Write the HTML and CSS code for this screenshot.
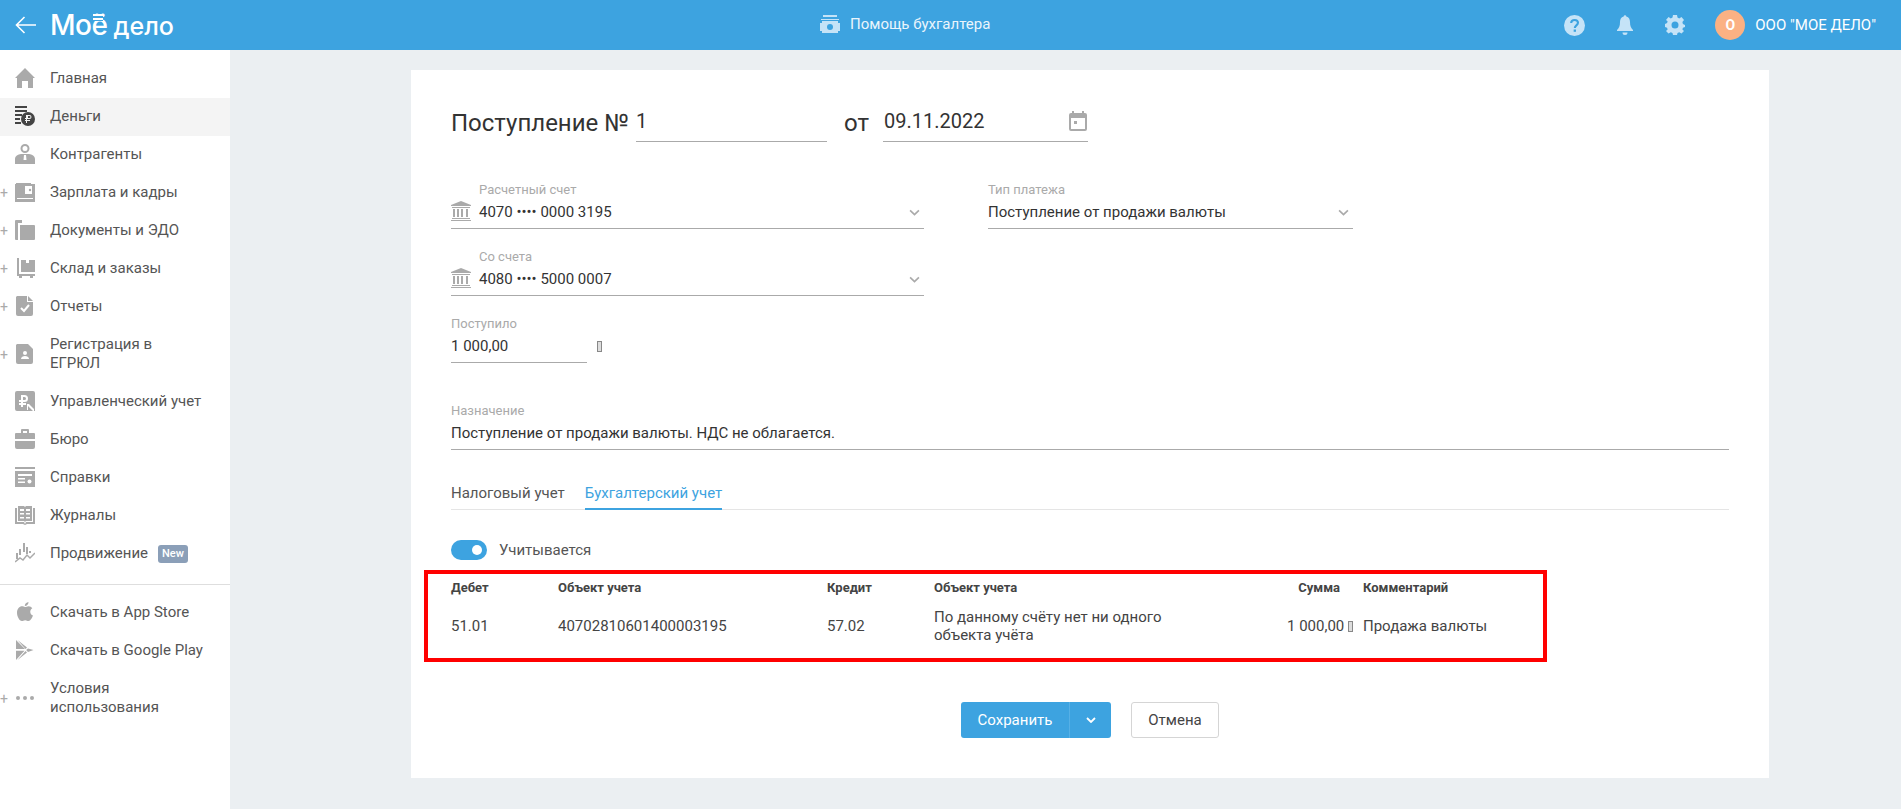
FILE: index.html
```html
<!DOCTYPE html>
<html lang="ru">
<head>
<meta charset="utf-8">
<title>Поступление</title>
<link rel="stylesheet" href="styles.css">
</head>
<body>
<header class="topbar">
  <div class="brand">
    <svg class="back" viewBox="0 0 21 18" width="21" height="18"><path d="M9.5 1 1.5 9l8 8M1.5 9H21" fill="none" stroke="#fff" stroke-width="1.6"/></svg>
    <span class="logo">Моё<span class="logo-small">дело</span><i class="logo-bars"></i></span>
  </div>
  <a class="help">
    <svg viewBox="0 0 20 20" width="20" height="20"><path fill="#c5e3f7" d="M3 1h14v2H3zM1 5h18v1H1zM0 7h20v12H0z"/><circle cx="10" cy="13" r="3" fill="#3da3e0"/><path fill="#3da3e0" d="M0 7h2v2H0zM18 7h2v2h-2zM0 17h2v2H0zM18 17h2v2h-2z"/></svg>
    Помощь бухгалтера
  </a>
  <div class="top-right">
    <svg class="ti-help" viewBox="0 0 20 20" width="21" height="21"><circle cx="10" cy="10" r="10" fill="#c5e3f7"/><path d="M6.8 7.6C6.9 5.6 8.300 4.700 10.100 4.700c1.900 0 3.200 1.100 3.200 2.700 0 2.500-3 2.500-3 5" fill="none" stroke="#3da3e0" stroke-width="2"/><rect x="9.200" y="13.800" width="2.200" height="2.200" fill="#3da3e0"/></svg>
    <svg class="ti-bell" viewBox="0 0 16 20" width="16" height="20"><path fill="#c5e3f7" d="M6.700 1.500a1.300 1.300 0 0 1 2.600 0C12 2.200 13 4.500 13 7c0 4 1 6 3 8v1H0v-1c2-2 3-4 3-8 0-2.500 1-4.800 3.700-5.500zM5.500 17.500h5A2.500 2.500 0 0 1 8 20a2.500 2.500 0 0 1-2.500-2.500z"/></svg>
    <svg class="ti-gear" viewBox="0 0 20 20" width="20" height="20"><path fill="#c5e3f7" fill-rule="evenodd" d="M8 0h4l.5 2.600 1.700.8L16.500 2l2.500 3-1.600 2.100.5 1.800L20 10v0l0 1.900-2.100.8-.5 1.800L19 16l-2.500 2.600-2.300-1.400-1.700.8L12 20H8l-.5-2-1.700-.8L3.500 18.600 1 16l1.600-1.500-.5-1.800L0 11.900V8.900l2.100-.9.5-1.800L1 5l2.500-3 2.300 1.400 1.700-.8zM10 6.500a3.500 3.500 0 1 0 0 7 3.500 3.500 0 0 0 0-7z"/></svg>
    <span class="avatar">О</span>
    <span class="org">ООО "МОЕ ДЕЛО"</span>
  </div>
</header>

<div class="layout">
  <nav class="sidebar">
    <ul class="menu">
      <li class="item"><svg class="ic" viewBox="0 0 20 20"><path d="M10 0 20 10h-2v10h-5v-7H7v7H2V10H0z"/></svg><span class="item-text">Главная</span></li>
      <li class="item active"><svg class="ic dark" viewBox="0 0 20 20"><path d="M0 0h12v2H0zM0 4h12v2H0zM0 8h7v2H0zM0 12h5v2H0zM0 16h6v2H0z"/><circle cx="13" cy="13" r="7"/><path d="M12 9h2.500a2 2 0 0 1 0 4H12v1h3v1h-3v2h-1v-2h-1v-1h1v-1h-1v-1h1V9zm1 1v2h1.500a1 1 0 0 0 0-2z" fill="#f4f4f4"/></svg><span class="item-text">Деньги</span></li>
      <li class="item"><svg class="ic" viewBox="0 0 20 20"><path fill-rule="evenodd" d="M10 0a4.500 4.500 0 1 1 0 9 4.500 4.500 0 0 1 0-9zm0 2a2.500 2.500 0 1 0 0 5 2.500 2.500 0 0 0 0-5zM6 10h8c3 .5 6 2 6 5v5H0v-5c0-3 3-4.500 6-5z"/><path fill="#fff" d="M9 11h2l.5 5h-3z"/></svg><span class="item-text">Контрагенты</span></li>
      <li class="item plus"><svg class="ic" viewBox="0 0 20 20"><path d="M0 2h20v18H0z"/><path fill="#aaa" d="M1 1h15v2H1z"/><path fill="#fff" d="M10 4h7v8h-7zM2 16h16v1H2z"/><circle cx="15" cy="8" r="1.200" fill="#aaa"/></svg><span class="item-text">Зарплата и кадры</span></li>
      <li class="item plus"><svg class="ic" viewBox="0 0 20 20"><path d="M1 0h6v3h-4v17H1a1 1 0 0 1-1-1V1a1 1 0 0 1 1-1zM5 5h14a1 1 0 0 1 1 1v13a1 1 0 0 1-1 1H5z"/></svg><span class="item-text">Документы и ЭДО</span></li>
      <li class="item plus"><svg class="ic" viewBox="0 0 20 20"><path d="M2 0h2v16h16v2h-2v2h-3v-2H7v2H4v-2H2zM6 2h14v12H6z"/><path fill="#fff" d="M11 2h3v3h-3z"/></svg><span class="item-text">Склад и заказы</span></li>
      <li class="item plus"><svg class="ic" viewBox="0 0 20 20"><path d="M2 0h11l5 5v13a2 2 0 0 1-2 2H3a2 2 0 0 1-2-2V1z"/><path d="m6 12 3 3 5-6" fill="none" stroke="#fff" stroke-width="2"/><path fill="#fff" d="M12 0h1v5h5v1h-6z"/></svg><span class="item-text">Отчеты</span></li>
      <li class="item plus"><svg class="ic" viewBox="0 0 20 20"><path d="M2 0h11l5 5v13a2 2 0 0 1-2 2H3a2 2 0 0 1-2-2V1z"/><circle cx="10" cy="9" r="2" fill="#fff"/><path fill="#fff" d="M6 15c0-2 2-3 4-3s4 1 4 3z"/></svg><span class="item-text">Регистрация в<br>ЕГРЮЛ</span></li>
      <li class="item"><svg class="ic" viewBox="0 0 20 20"><path fill-rule="evenodd" d="M2 0h16a2 2 0 0 1 2 2v18H2a2 2 0 0 1-2-2V2a2 2 0 0 1 2-2zm4 4v5H4v2h2v1H4v2h2v2h2v-2h3v-2H8v-1h1.500a3.500 3.500 0 0 0 0-7zm2 2h1.500a1.500 1.500 0 0 1 0 3H8z"/><path d="m14 13 5 5v2h-1l-5-5v4h-1v-6z" fill="#fff"/></svg><span class="item-text">Управленческий учет</span></li>
      <li class="item"><svg class="ic" viewBox="0 0 20 20"><path d="M7 0h6a1 1 0 0 1 1 1v3h5a1 1 0 0 1 1 1v5H0V5a1 1 0 0 1 1-1h5V1a1 1 0 0 1 1-1zM8 2v2h4V2zM0 12h20v6a2 2 0 0 1-2 2H2a2 2 0 0 1-2-2z"/></svg><span class="item-text">Бюро</span></li>
      <li class="item"><svg class="ic" viewBox="0 0 20 20"><path d="M0 0h20v2H0zM0 4h20v16H0z"/><path fill="#fff" d="M3 7h14v2H3zM3 11h7v1.500H3zM3 14.500h7V16H3z"/><circle cx="14.500" cy="14.500" r="2" fill="#fff"/></svg><span class="item-text">Справки</span></li>
      <li class="item"><svg class="ic" viewBox="0 0 20 20"><path fill-rule="evenodd" d="M0 3h2v14h7l1 2 1-2h7V3h2v16h-8l-2 1-2-1H0zM3 1h6l1 1 1-1h6v15h-6l-1 1-1-1H3zm2 3v2h4V4zm6 0v2h4V4zM5 8v1.500h4V8zm6 0v1.500h4V8zm-6 4v1.500h4V12zm6 0v1.500h4V12z"/></svg><span class="item-text">Журналы</span></li>
      <li class="item"><svg class="ic" viewBox="0 0 20 20"><path d="M8 0h2v9H8zM4 6h2v6H4zM1 10h2v6H1zM11 4h2v7h-2zM14 8h2v2h-2z"/><path d="m0 19 5-4 3 2 4-5 3 3 5-5" fill="none" stroke="#aaa" stroke-width="1.500"/></svg><span class="item-text">Продвижение</span><span class="badge">New</span></li>
    </ul>
    <ul class="menu bottom">
      <li class="item"><svg class="ic" viewBox="0 0 20 20"><path d="M13.500 0c.2 2.200-1.700 4.200-3.700 4.100C9.600 2 11.600.2 13.500 0zM10 5c1 0 2-.8 3.600-.8 1.500 0 2.900.8 3.700 2-3 1.900-2.500 6 .7 7.300-.8 2.200-2.500 5.500-4.500 5.500-1.200 0-1.700-.8-3.300-.8s-2.200.8-3.400.8C4.500 19 2 14.500 2 10.700 2 6.800 4.500 4.300 7 4.300 8.300 4.300 9.200 5 10 5z"/></svg><span class="item-text">Скачать в App Store</span></li>
      <li class="item"><svg class="ic" viewBox="0 0 20 20"><path d="M1 0 10 9 1 9zM1 20V10.800h8.500zM2.500 0l9.500 7.500L10.500 9zM2.500 20l9.500-7.500-1.500-1.500zM13 8.500l5.500 1.500-5.500 2-1.800-2z"/></svg><span class="item-text">Скачать в Google Play</span></li>
      <li class="item plus"><svg class="ic" viewBox="0 0 20 20"><circle cx="3" cy="10" r="2"/><circle cx="10" cy="10" r="2"/><circle cx="17" cy="10" r="2"/></svg><span class="item-text">Условия<br>использования</span></li>
    </ul>
  </nav>

  <main class="main">
    <section class="card">
      <div class="doc-head">
        <span class="doc-title">Поступление №</span>
        <span class="head-input number">1</span>
        <span class="doc-from">от</span>
        <span class="head-input date">09.11.2022
          <svg viewBox="0 0 18 20" width="18" height="20"><path fill="#aaa" d="M3 0h2v2h8V0h2v2h1a2 2 0 0 1 2 2v14a2 2 0 0 1-2 2H2a2 2 0 0 1-2-2V4a2 2 0 0 1 2-2h1z"/><path fill="#fff" d="M2 7h14v11H2z"/><path fill="#aaa" d="M5 10h3v3H5z"/></svg>
        </span>
      </div>

      <div class="form-row first">
        <div class="field wide with-icon">
          <label class="field-label">Расчетный счет</label>
          <div class="field-value">
            <svg class="bank" viewBox="0 0 20 20" width="20" height="20"><path fill="#aaa" d="M10 0 20 4v1H0V4zM1 6h18v1H1zM2 8h2v8H2zM6 8h2v8H6zM10 8h2v8h-2zM15 8h2v8h-2zM1 17h18v1H1zM0 19h20v1H0z"/></svg>
            <span>4070 •••• 0000 3195</span>
            <svg class="chev" viewBox="0 0 10 6" width="11" height="7"><path d="m1 1 4 4 4-4" fill="none" stroke="#aaa" stroke-width="1.500"/></svg>
          </div>
        </div>
        <div class="field type">
          <label class="field-label">Тип платежа</label>
          <div class="field-value"><span>Поступление от продажи валюты</span>
            <svg class="chev" viewBox="0 0 10 6" width="11" height="7"><path d="m1 1 4 4 4-4" fill="none" stroke="#aaa" stroke-width="1.500"/></svg>
          </div>
        </div>
      </div>

      <div class="form-row">
        <div class="field wide with-icon">
          <label class="field-label">Со счета</label>
          <div class="field-value">
            <svg class="bank" viewBox="0 0 20 20" width="20" height="20"><path fill="#aaa" d="M10 0 20 4v1H0V4zM1 6h18v1H1zM2 8h2v8H2zM6 8h2v8H6zM10 8h2v8h-2zM15 8h2v8h-2zM1 17h18v1H1zM0 19h20v1H0z"/></svg>
            <span>4080 •••• 5000 0007</span>
            <svg class="chev" viewBox="0 0 10 6" width="11" height="7"><path d="m1 1 4 4 4-4" fill="none" stroke="#aaa" stroke-width="1.500"/></svg>
          </div>
        </div>
      </div>

      <div class="form-row">
        <div class="field amount">
          <label class="field-label">Поступило</label>
          <div class="field-value">1 000,00</div>
        </div>
        <i class="tofu amount-tofu"></i>
      </div>

      <div class="field purpose">
        <label class="field-label">Назначение</label>
        <div class="field-value">Поступление от продажи валюты. НДС не облагается.</div>
      </div>

      <div class="tabs">
        <span class="tab">Налоговый учет</span>
        <span class="tab active">Бухгалтерский учет</span>
      </div>

      <div class="toggle-row">
        <span class="toggle"><i class="knob"></i></span>
        <span>Учитывается</span>
      </div>

      <div class="entries">
        <div class="th">Дебет</div>
        <div class="th">Объект учета</div>
        <div class="th">Кредит</div>
        <div class="th">Объект учета</div>
        <div class="th sum-head">Сумма</div>
        <div class="th">Комментарий</div>
        <div class="td">51.01</div>
        <div class="td">40702810601400003195</div>
        <div class="td">57.02</div>
        <div class="td">По данному счёту нет ни одного объекта учёта</div>
        <div class="td sum">1 000,00 <i class="tofu"></i></div>
        <div class="td">Продажа валюты</div>
      </div>

      <div class="actions">
        <div class="btn-split">
          <span class="btn-main">Сохранить</span>
          <span class="btn-arrow"><svg viewBox="0 0 10 6" width="10" height="6"><path d="m1 1 4 4 4-4" fill="none" stroke="#fff" stroke-width="1.800"/></svg></span>
        </div>
        <span class="btn-cancel">Отмена</span>
      </div>
    </section>
  </main>
</div>
</body>
</html>
```

FILE: styles.css
```css
* { box-sizing: border-box; }
html, body { margin: 0; height: 100%; }
body {
  font-family: Roboto, "Liberation Sans", sans-serif;
  font-size: 15px;
  color: #444;
  background: #ebeff2;
  overflow: hidden;
}
ul { list-style: none; margin: 0; padding: 0; }

.topbar {
  height: 50px;
  background: #3da3e0;
  display: flex;
  align-items: center;
  color: #fff;
}
.brand { width: 820px; display: flex; align-items: center; padding-left: 15px; }
.back { display: block; }
.logo {
  position: relative;
  display: flex;
  align-items: baseline;
  margin-left: 14px;
  font-family: Inter, sans-serif;
  font-size: 28px;
  font-weight: 500;
  letter-spacing: -0.5px;
  line-height: 34px;
  white-space: nowrap;
}
.logo-small { font-size: 25px; margin-left: 6px; letter-spacing: 0; }
.logo-bars {
  position: absolute;
  left: 43px; top: 6px;
  width: 10px; height: 7px;
  background: linear-gradient(#fff 2px, #3da3e0 2px, #3da3e0 4px, #fff 4px, #fff 6px, #3da3e0 6px);
}
.help { display: flex; align-items: center; gap: 10px; color: #eaf5fc; font-size: 15px; margin-bottom: 2px; }
.top-right { margin-left: auto; display: flex; align-items: center; padding-right: 25px; }
.ti-bell { margin-left: 32px; }
.ti-gear { margin-left: 32px; }
.avatar {
  margin-left: 30px;
  width: 30px; height: 30px; border-radius: 50%;
  background: #fbb183; color: #fff; font-weight: 700; font-size: 14px;
  display: flex; align-items: center; justify-content: center;
}
.org { margin-left: 10px; color: #fff; font-size: 15px; }

.layout { display: flex; height: 759px; }
.sidebar { width: 230px; background: #fff; padding-top: 10px; flex: none; }
.item {
  position: relative;
  display: flex;
  align-items: center;
  padding: 9px 10px 10px 50px;
  line-height: 19px;
  color: #555;
}
.item.active { background: #f4f4f4; }
.item.plus::before {
  content: "+";
  position: absolute;
  left: 0; top: 50%;
  transform: translateY(-50%);
  color: #aaa;
  font-size: 14px;
}
.ic { position: absolute; left: 15px; top: 50%; margin-top: -11px; width: 20px; height: 20px; fill: #aaa; }
.ic.dark { fill: #444; }
.item-text { white-space: nowrap; }
.badge {
  margin-left: 10px;
  background: #8b9fb8;
  color: #fff;
  font-size: 11px;
  font-weight: 500;
  line-height: 18px;
  padding: 0 4px;
  border-radius: 3px;
}
.bottom { margin-top: 11px; padding-top: 9px; border-top: 1px solid #dedede; }

.main { flex: 1; padding: 20px 0 0 181px; }
.card { width: 1358px; background: #fff; padding: 31px 40px 40px; }

.doc-head { display: flex; align-items: flex-end; height: 41px; color: #333; }
.doc-title { width: 175px; font-size: 24px; line-height: 38px; color: #333; white-space: nowrap; }
.head-input {
  display: flex; justify-content: space-between; align-items: center;
  height: 41px; border-bottom: 1px solid #aaa;
  font-size: 20px; color: #333;
}
.number { width: 191px; margin-left: 10px; }
.doc-from { font-size: 24px; margin-left: 17px; width: 39px; line-height: 38px; }
.date { width: 205px; padding-left: 1px; padding-right: 1px; }

.form-row { display: flex; margin-top: 19px; height: 48px; }
.form-row.first { margin-top: 39px; }
.field-label { display: block; font-size: 13px; line-height: 18px; color: #aaa; }
.field-value {
  position: relative;
  display: flex; align-items: center;
  height: 30px; padding-bottom: 4px;
  border-bottom: 1px solid #aaa;
  color: #333;
}
.wide { width: 473px; }
.with-icon .field-label { padding-left: 28px; }
.with-icon .field-value { padding-left: 28px; }
.bank { position: absolute; left: 0; top: 2px; }
.chev { position: absolute; right: 4px; top: 10px; }
.type { width: 365px; margin-left: 64px; }
.amount { width: 136px; }
.tofu {
  display: inline-block;
  width: 5px; height: 11px;
  border: 1px solid #888;
  background: #ddd;
  vertical-align: -1px;
}
.amount-tofu { margin: 26px 0 0 10px; }
.purpose { margin-top: 39px; }

.tabs { display: flex; gap: 20px; margin-top: 20px; height: 40px; border-bottom: 1px solid #e5e5e5; }
.tab { height: 40px; line-height: 46px; color: #555; }
.tab.active { color: #3da3e0; border-bottom: 2px solid #3da3e0; }

.toggle-row { display: flex; align-items: center; gap: 12px; margin-top: 30px; height: 20px; color: #555; }
.toggle { position: relative; display: block; width: 36px; height: 20px; border-radius: 10px; background: #3da3e0; }
.knob { position: absolute; right: 5px; top: 5px; width: 10px; height: 10px; border-radius: 50%; background: #fff; }

.entries {
  margin: 10px 0 0 -27px;
  width: 1123px; height: 92px;
  padding-left: 23px;
  border: 4px solid #f00;
  display: grid;
  grid-template-columns: 107px 269px 107px 260px 159px 1fr;
  grid-template-rows: 28px 48px;
}
.th { font-size: 13px; font-weight: 700; color: #444; line-height: 28px; }
.td { align-self: center; line-height: 18px; color: #444; }
.entries .td:nth-child(10) { max-width: 240px; }
.entries .td:nth-child(12) { margin-left: 10px; }
.entries .th:nth-child(6) { margin-left: 10px; }
.sum-head { text-align: right; padding-right: 13px; }
.sum { text-align: right; }

.actions { display: flex; justify-content: center; gap: 20px; margin-top: 40px; }
.btn-split { display: flex; height: 36px; width: 150px; background: #3da3e0; border-radius: 3px; color: #fff; }
.btn-main { width: 109px; line-height: 36px; text-align: center; border-right: 1px solid #56b0e6; }
.btn-arrow { flex: 1; display: flex; align-items: center; justify-content: center; }
.btn-cancel {
  width: 88px; height: 36px; line-height: 34px; text-align: center;
  border: 1px solid #d5d5d5; border-radius: 3px; color: #444;
}
```
